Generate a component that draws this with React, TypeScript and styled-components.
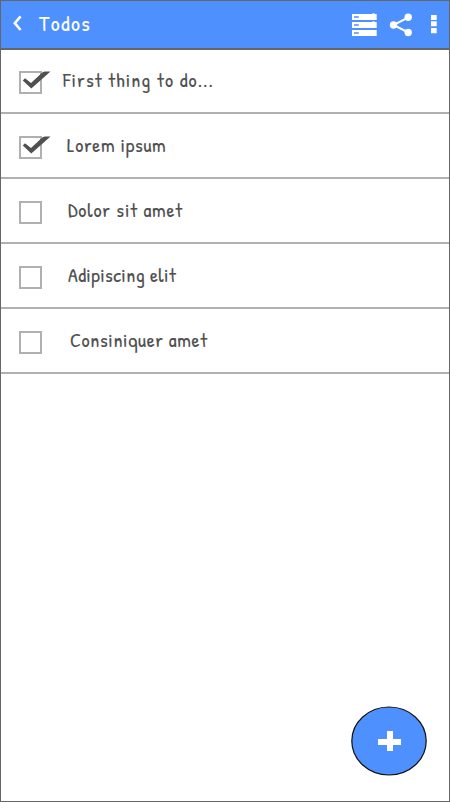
import React from 'react';
import styled, { createGlobalStyle } from 'styled-components';

const GlobalStyle = createGlobalStyle`
  * { box-sizing: border-box; }
  body { margin: 0; background: #fff; }
`;

const Screen = styled.div`
  width: 450px;
  height: 802px;
  border: 1px solid #666;
  background: #fff;
  display: flex;
  flex-direction: column;
  overflow: hidden;
  font-family: 'Patrick Hand', Lato, sans-serif;
`;

const Toolbar = styled.header`
  flex: none;
  height: 49px;
  padding: 0 12px 0 11px;
  background: #4d90fe;
  border-bottom: 2px solid #666;
  display: flex;
  align-items: center;
`;

const IconButton = styled.button<{ $width: number; $gap?: number }>`
  flex: none;
  width: ${({ $width }) => $width}px;
  height: 27px;
  margin: 0 0 0 ${({ $gap = 0 }) => $gap}px;
  padding: 0;
  border: 0;
  background: none;
  color: #fff;
  display: flex;
  svg { display: block; }
`;

const Title = styled.h1`
  flex: 1;
  margin: -3px 0 0 16px;
  color: #fff;
  font-size: 22px;
  line-height: 24px;
  font-weight: 400;
  letter-spacing: 1.4px;
  -webkit-text-stroke: 0.1px currentColor;
`;

const List = styled.ul`
  flex: 1;
  margin: 0;
  padding: 0;
  list-style: none;
`;

const Row = styled.li`
  height: 65px;
  padding: 22px 0 0 18px;
  border-bottom: 2px solid #b0b0b0;
  display: flex;
  align-items: flex-start;
  &:first-child { height: 64px; padding-top: 21px; }
`;

const Checkbox = styled.span`
  flex: none;
  width: 23px;
  height: 23px;
  border: 2px solid #b0b0b0;
  svg { display: block; overflow: visible; }
`;

const Label = styled.span<{ $indent: number; $spacing: number }>`
  margin: -3px 0 0 ${({ $indent }) => $indent}px;
  color: #505050;
  font-size: 20px;
  line-height: 24px;
  letter-spacing: ${({ $spacing }) => $spacing}px;
  white-space: nowrap;
  -webkit-text-stroke: 0.12px currentColor;
`;

const Footer = styled.footer`
  flex: none;
  padding: 0 22px 25px 0;
  display: flex;
  justify-content: flex-end;
`;

const AddButton = styled.button`
  width: 76px;
  height: 70px;
  padding: 0;
  border: 0;
  background: none;
  svg { display: block; }
`;

const todos = [
  { text: 'First thing to do...', done: true, indent: 21, spacing: 1.07 },
  { text: 'Lorem ipsum', done: true, indent: 25, spacing: 0.7 },
  { text: 'Dolor sit amet', done: false, indent: 26, spacing: 0.85 },
  { text: 'Adipiscing elit', done: false, indent: 26, spacing: 0.4 },
  { text: 'Consiniquer amet', done: false, indent: 28, spacing: 0.63 },
];

const Tick = () => (
  <svg width="19" height="19" viewBox="1 1 19 19" aria-hidden="true">
    <path d="M2.8 8.4 5 6.2 11 11 22 .8Q23.5 -.5 25.5 -.5H30.5L11.3 16.4Z" fill="#505050" />
  </svg>
);

export default function App() {
  return (
    <>
      <GlobalStyle />
      <Screen>
        <Toolbar>
          <IconButton $width={11} aria-label="Back">
            <svg width="11" height="27" viewBox="0 0 11 27" fill="none">
              <path d="M8.6 5.3 2.8 12.2 8.6 19" stroke="#fff" strokeWidth="2.6" />
            </svg>
          </IconButton>
          <Title>Todos</Title>
          <IconButton $width={26} aria-label="List view">
            <svg width="26" height="27" viewBox="0 0 26 27">
              <path d="M1 3H25.7V9H1ZM1 11H25.7V17H1ZM1 19H25.7V25H1ZM21 2.6H24V4H21ZM21 10.6H24V12H21Z" fill="#fff" />
              <path d="M3 6H7.8M3 14H7.8M3 22H7.8" stroke="#4d90fe" strokeWidth="1.3" />
            </svg>
          </IconButton>
          <IconButton $width={23} $gap={12} aria-label="Share">
            <svg width="23" height="27" viewBox="0 0 23 27" fill="#fff">
              <path d="M19.4 6.3 4.5 14 19.4 21.5" fill="none" stroke="#fff" strokeWidth="2" />
              <circle cx="4.5" cy="14" r="3.7" />
              <circle cx="19.2" cy="6.3" r="3.7" />
              <circle cx="19.2" cy="21.5" r="3.7" />
            </svg>
          </IconButton>
          <IconButton $width={7} $gap={18} aria-label="More">
            <svg width="7" height="27" viewBox="0 0 7 27" fill="#fff">
              <path d="M1 4H6.7V9H1ZM1 10.3H6.7V15.3H1ZM1 17H6.7V22.3H1Z" />
            </svg>
          </IconButton>
        </Toolbar>
        <List>
          {todos.map((todo) => (
            <Row key={todo.text}>
              <Checkbox role="checkbox" aria-checked={todo.done}>
                {todo.done && <Tick />}
              </Checkbox>
              <Label $indent={todo.indent} $spacing={todo.spacing}>{todo.text}</Label>
            </Row>
          ))}
        </List>
        <Footer>
          <AddButton aria-label="Add todo">
            <svg width="76" height="70" viewBox="0 0 76 70">
              <ellipse cx="38" cy="35" rx="37.2" ry="34" fill="#4d90fe" stroke="#111" strokeWidth="1.2" />
              <path d="M36 25H42V33H50V39H42V45H36V39H27V33H36Z" fill="#fff" />
            </svg>
          </AddButton>
        </Footer>
      </Screen>
    </>
  );
}
